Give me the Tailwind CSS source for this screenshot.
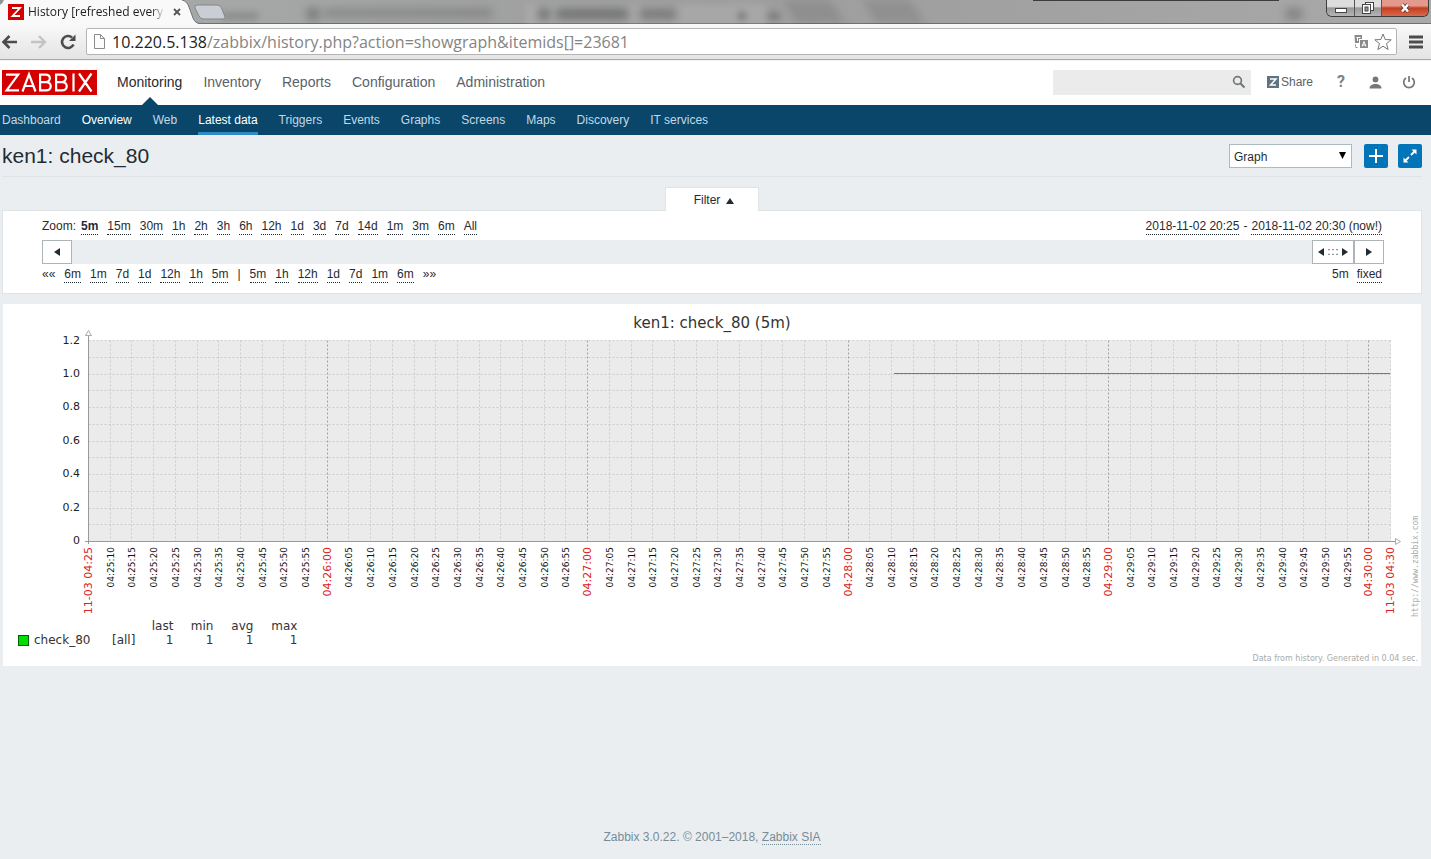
<!DOCTYPE html>
<html lang="en">
<head>
<meta charset="utf-8">
<title>History [refreshed every 30 sec.]</title>
<script src="https://cdn.jsdelivr.net/npm/@tailwindcss/browser@4"></script>
</head>
<body class="min-h-screen flex flex-col bg-[#ebeef0] font-['Liberation_Sans',Arial,sans-serif] text-xs text-[#1f2c33]">

<!-- Browser window: title bar -->
<div class="relative h-6 overflow-hidden bg-linear-to-r from-[#a9abab] via-[#9d9d9d] to-[#a8a8a8] flex justify-between items-start shadow-[inset_0_-1px_0_#6f6f6f]">
  <div aria-hidden="true" class="absolute inset-0 overflow-hidden">
    <div class="absolute left-[222px] top-3 w-9 h-2 bg-black/15 blur-[3px]"></div>
    <div class="absolute left-[307px] top-2 w-3 h-3 bg-black/25 blur-[4px]"></div>
    <div class="absolute left-[324px] top-2 w-42 h-2.5 bg-black/15 blur-[4px]"></div>
    <div class="absolute left-[526px] top-1 w-60 h-6 bg-white/10 blur-[3px]"></div>
    <div class="absolute left-[538px] top-2 w-3 h-3 bg-black/30 blur-[4px]"></div>
    <div class="absolute left-[556px] top-2 w-18 h-3 bg-black/30 blur-[4px]"></div>
    <div class="absolute left-[640px] top-2 w-9 h-3 bg-black/25 blur-[4px]"></div>
    <div class="absolute left-[738px] top-3 w-2 h-2 bg-black/25 blur-[3px]"></div>
    <div class="absolute left-[768px] top-3 w-3 h-2 bg-black/20 blur-[3px]"></div>
    <div class="absolute left-[790px] top-0 w-12 h-6 bg-black/10 blur-[5px] skew-x-[30deg]"></div>
    <div class="absolute left-[870px] top-0 w-12 h-6 bg-black/10 blur-[5px] skew-x-[30deg]"></div>
    <div class="absolute left-[1286px] top-2 w-4 h-3 bg-black/20 blur-[4px]"></div>
    <div class="absolute left-[1033px] -top-px w-[246px] h-0.5 bg-[#3c3c3c]"></div>
  </div>
  <div class="relative flex">
    <div class="relative w-[197px] h-6 flex items-center pl-2">
      <svg class="absolute inset-0" width="232" height="24" aria-hidden="true">
        <path d="M0 0H182Q187 1 189 7L193 18Q195 24 201 24H0Z" fill="#f9f9f9"/>
        <path d="M0 0V5Q3 3 4 0Z" fill="#8f9694"/>
        <path d="M182 0Q187 1 189 7L193 18Q195 23.500 201 23.500" fill="none" stroke="#6f7476"/>
        <path d="M197 5H217Q221 5 222 9L225 17Q226 19 223 19H204Q200 19 199 16L195 8Q194 5 197 5Z" fill="#c9ced4" stroke="#83878a"/>
      </svg>
      <svg class="relative shrink-0" width="16" height="16" viewBox="0 0 16 16" aria-hidden="true"><path fill="#d40000" d="M0 0h16v16H0z"/><path d="M4 4h8L4.500 12H12" fill="none" stroke="#fff" stroke-width="1.800"/></svg>
      <span class="relative ml-1 w-[137px] whitespace-nowrap text-[12px] leading-5 text-[#222] font-['Open_Sans',sans-serif] mask-r-from-90%">History [refreshed every</span>
      <button aria-label="Close tab" class="relative ml-2 shrink-0"><svg width="8" height="8"><path d="M1 1l6 6M7 1l-6 6" stroke="#555" stroke-width="1.800"/></svg></button>
    </div>
  </div>
  <div class="relative flex mr-0.5 h-[17px] rounded-b-md overflow-hidden border border-t-0 border-[#3c3c3c]">
    <button aria-label="Minimize" class="w-7 flex items-center justify-center border-r border-[#555] bg-linear-to-b from-[#ddd] from-40% via-[#999] via-50% to-[#b5b5b5]"><svg width="14" height="14"><rect x="1.500" y="7.500" width="11" height="4" fill="#fff" stroke="#444"/></svg></button>
    <button aria-label="Restore" class="w-[27px] flex items-center justify-center border-r border-[#555] bg-linear-to-b from-[#ddd] from-40% via-[#999] via-50% to-[#b5b5b5]"><svg width="14" height="14"><rect x="4.500" y="1.500" width="8" height="8" fill="#fff" stroke="#444"/><rect x="1.500" y="3.500" width="8" height="9" fill="#fff" stroke="#444"/><rect x="4" y="6" width="3" height="4" fill="#999" stroke="#444"/></svg></button>
    <button aria-label="Close window" class="w-[46px] flex items-center justify-center bg-linear-to-b from-[#e39a8c] from-35% via-[#c33c1f] via-50% to-[#d9694b]"><svg width="14" height="12"><path d="M4 2.500l6 7M10 2.500l-6 7" stroke="#533" stroke-width="4"/><path d="M4 2.500l6 7M10 2.500l-6 7" stroke="#fff" stroke-width="2.500"/></svg></button>
  </div>
</div>

<!-- Browser window: toolbar -->
<div class="h-9 flex items-center bg-linear-to-b from-[#f9f9f9] to-[#e4e4e4] border-b border-[#aaa]">
  <button aria-label="Back" class="ml-px w-[30px]"><svg width="17" height="16"><path d="M16 8H3M8.500 2L2.500 8l6 6" fill="none" stroke="#4c4c4c" stroke-width="2.600"/></svg></button>
  <button aria-label="Forward" class="w-7"><svg width="17" height="16"><path d="M0 8h13M8 2l6 6-6 6" fill="none" stroke="#c4c4c4" stroke-width="2.400"/></svg></button>
  <button aria-label="Reload" class="w-[27px]"><svg width="18" height="18"><path d="M14.500 11.500A6 6 0 1 1 13 4.500" fill="none" stroke="#4c4c4c" stroke-width="2.600"/><path d="M16.500 1.500V8H10z" fill="#4c4c4c"/></svg></button>
  <div class="flex-1 h-[27px] flex items-center bg-white border border-[#b4b4b4] rounded-xs px-1.5">
    <svg class="shrink-0" width="13" height="16"><path d="M1.500.500h6l4 4v10h-10zM7.500.500v4h4" fill="#fcfcfc" stroke="#8b8b8b"/></svg>
    <a href="#" class="flex-1 ml-1.5 whitespace-nowrap text-[16px] leading-6 text-[#848484] font-['Open_Sans',sans-serif]" aria-label="Address"><span class="text-[#222]">10.220.5.138</span>/zabbix/history.php?action=showgraph&amp;itemids[]=23681</a>
    <button aria-label="Translate this page" class="mr-1.5"><svg width="14" height="14"><path d="M.5 0H8v4H5v4H1z" fill="#8a8a8a"/><path d="M2.500 2.500h4M3.500 2v4" stroke="#fff"/><rect x="6" y="5" width="8" height="8" fill="#8a8a8a"/><path d="M8 11.500l2-5 2 5M8.500 10h3" fill="none" stroke="#fff"/><path d="M1.500 9.500v3h3" fill="none" stroke="#8a8a8a" stroke-dasharray="2 1"/></svg></button>
    <button aria-label="Bookmark this page" class="-mr-0.5"><svg width="18" height="18" viewBox="0 0 18 18"><path d="M9 1l2.200 5.500 6 .3-4.700 3.800 1.600 5.900L9 13.200l-5.100 3.300 1.600-5.900L.8 6.800l6-.3z" fill="#fff" stroke="#777"/></svg></button>
  </div>
  <button aria-label="Menu" class="ml-3 mr-2"><svg width="14" height="14"><path d="M0 2h14M0 7h14M0 12h14" stroke="#4c4c4c" stroke-width="2.800"/></svg></button>
</div>

<!-- Zabbix header -->
<header class="bg-white border-t border-[#f1f1f1]">
  <div class="h-11 flex items-center pb-0.5 pl-0.5 pr-[15px]">
    <a href="#" aria-label="ZABBIX" class="w-[95px] h-[25px] bg-[#d40000] shrink-0"><svg width="95" height="25" viewBox="0 0 95 25"><path fill="none" stroke="#fff" stroke-width="2.200" d="M4 4.600h12.200L4.600 20.400H17M20.500 21.500L27 4.400l6.500 17.100M22.800 16h8.500M38.100 4.600h5.400c5.800 0 5.800 7.500 0 7.500h-5.400zM38.100 12.100h6c6.200 0 6.200 8.300 0 8.300h-6zM54.100 4.600h5.400c5.800 0 5.800 7.500 0 7.500h-5.400zM54.100 12.100h6c6.200 0 6.200 8.300 0 8.300h-6zM71.500 3.500v18M77 3.500l12.500 18M89.500 3.500L77 21.500"/></svg></a>
    <nav aria-label="Main" class="ml-5 h-full flex items-center gap-[21px] text-sm text-[#5a6268]">
      <a href="#" class="relative h-full flex items-center text-[#1f2c33]">Monitoring<span class="absolute -bottom-0.5 left-1/2 -translate-x-1/2 border-x-8 border-b-8 border-x-transparent border-b-[#0a466a]"></span></a>
      <a href="#">Inventory</a><a href="#">Reports</a><a href="#">Configuration</a><a href="#">Administration</a>
    </nav>
    <form class="ml-auto flex items-center w-[198px] h-[25px] bg-[#ebebeb]">
      <input type="search" aria-label="Search" class="flex-1 min-w-0 h-full px-2 bg-transparent outline-none">
      <button type="button" aria-label="Search" class="mr-[5px]"><svg width="14" height="14"><circle cx="5.500" cy="5.500" r="3.900" fill="none" stroke="#73787c" stroke-width="1.700"/><path d="M8.500 8.500l4 4" stroke="#73787c" stroke-width="2.200"/></svg></button>
    </form>
    <a href="#" class="ml-4 flex items-center gap-0.5 text-[#5a6268]"><svg width="12" height="12"><path fill="#5f7380" d="M0 0h12v12H0z"/><path d="M3 3h6L3.500 9H9" fill="none" stroke="#fff" stroke-width="1.500"/></svg>Share</a>
    <a href="#" aria-label="Help" class="ml-6 text-base leading-4 font-bold text-[#7b858c] font-[Roboto,sans-serif]">?</a>
    <a href="#" aria-label="Profile" class="ml-6"><svg width="13" height="13"><circle cx="6.500" cy="3.400" r="2.900" fill="#73787c"/><path d="M.5 12.500C.5 9.500 3 8 6.500 8s6 1.500 6 4.500z" fill="#73787c"/></svg></a>
    <a href="#" aria-label="Sign out" class="ml-5"><svg width="14" height="14"><path d="M4 3A5.300 5.300 0 1 0 10 3M7 1v6" fill="none" stroke="#73787c" stroke-width="1.700"/></svg></a>
  </div>
  <nav aria-label="Monitoring" class="h-[30px] flex items-stretch gap-[21px] pl-0.5 bg-[#0a466a] text-[#c3d9e6] leading-[30px] whitespace-nowrap">
    <a href="#">Dashboard</a><a href="#" class="text-white">Overview</a><a href="#">Web</a><a href="#" class="text-white shadow-[inset_0_-3px_0_#2f8bc4]">Latest data</a><a href="#">Triggers</a><a href="#">Events</a><a href="#">Graphs</a><a href="#">Screens</a><a href="#">Maps</a><a href="#">Discovery</a><a href="#">IT services</a>
  </nav>
</header>

<main class="flex-1 pl-0.5 pr-[9px]">
  <div class="h-[42px] flex items-center pt-px border-b border-[#dfe4e7]">
    <h1 class="text-[21px] flex-1">ken1: check_80</h1>
    <div class="relative">
      <select aria-label="View as" class="appearance-none block w-[123px] h-6 pl-1 pt-0.5 bg-white border border-[#acbbc2] text-xs"><option>Graph</option></select>
      <svg class="absolute right-1.5 top-2 pointer-events-none" width="7" height="7"><path d="M0 0h7L3.500 7z" fill="#000"/></svg>
    </div>
    <button aria-label="Add to favourites" class="ml-3 w-6 h-6 rounded-xs bg-[#0275b8]"><svg width="24" height="24"><path d="M12 5v14M5 12h14" stroke="#fff" stroke-width="2"/></svg></button>
    <button aria-label="Fullscreen" class="ml-2.5 w-6 h-6 rounded-xs bg-[#0275b8]"><svg width="24" height="24"><path d="M13.500 5.500h5v5zM5.500 13.500v5h5z" fill="#fff"/><path d="M17 7l-4 4M7 17l4-4" stroke="#fff" stroke-width="1.800"/></svg></button>
  </div>

  <!-- Time filter -->
  <div class="pt-2.5 flex justify-center"><button class="relative -mb-px w-[94px] h-6 bg-white border border-b-0 border-[#dfe4e7] flex items-center justify-center gap-1.5 pl-1">Filter <svg class="mt-0.5" width="8" height="6"><path d="M0 6h8L4 0z" fill="#1f2c33"/></svg></button></div>
  <section aria-label="Time period" class="h-[84px] bg-white border border-[#dfe4e7] pl-[39px] pr-[37px] pt-2">
    <div class="flex justify-between leading-[15px] pr-0.5">
      <div class="flex" id="zoom"><span class="mr-[5px]">Zoom:</span></div>
      <div class="flex gap-1"><a href="#" class="border-b border-dotted border-[#1f2c33]">2018-11-02 20:25</a><span>-</span><a href="#" class="border-b border-dotted border-[#1f2c33]">2018-11-02 20:30 (now!)</a></div>
    </div>
    <div class="mt-[5px] h-6 flex justify-end bg-[#ebeef0]">
      <button aria-label="Earlier" class="w-[30px] mr-auto bg-white border border-[#acb4b8] flex items-center justify-center"><svg width="6" height="8"><path d="M6 0v8L0 4z" fill="#1f2c33"/></svg></button>
      <button aria-label="Drag period" class="w-[42px] bg-white border border-[#acb4b8] flex items-center justify-center gap-1"><svg width="6" height="8"><path d="M6 0v8L0 4z" fill="#1f2c33"/></svg><svg width="10" height="6"><path d="M0 .500h10M0 5.500h10" stroke="#999" stroke-width="1.500" stroke-dasharray="2"/></svg><svg width="6" height="8"><path d="M0 0v8l6-4z" fill="#1f2c33"/></svg></button>
      <button aria-label="Later" class="w-[30px] bg-white border border-[#acb4b8] flex items-center justify-center"><svg width="6" height="8"><path d="M0 0v8l6-4z" fill="#1f2c33"/></svg></button>
    </div>
    <div class="mt-[3px] flex justify-between leading-[15px] pr-0.5">
      <div class="flex gap-[9px]" id="shift"></div>
      <div class="flex gap-2"><span>5m</span><a href="#" class="border-b border-dotted border-[#1f2c33]">fixed</a></div>
    </div>
  </section>

  <!-- Graph -->
  <section aria-label="Graph" class="mt-[10px] ml-px mr-px pt-1.5 bg-white font-['DejaVu_Sans',sans-serif] text-[#333]">
    <h2 class="text-center text-[15px] leading-[26px] -mb-1.5">ken1: check_80 (5m)</h2>
    <svg id="chart" class="block w-full h-auto relative" viewBox="3 330 1418 289" role="img" aria-label="check_80 history"></svg>
    <table class="ml-[15px] leading-[14px]">
      <thead><tr><td class="w-[94px]"></td><td class="w-[22px]"></td><th class="w-[38px] font-normal text-right">last</th><th class="w-[40px] font-normal text-right">min</th><th class="w-[40px] font-normal text-right">avg</th><th class="w-[44px] font-normal text-right">max</th></tr></thead>
      <tbody><tr><td><span class="flex items-center gap-[5px]"><i class="w-[11px] h-[11px] bg-[#00dd00] border border-[#006000]"></i>check_80</span></td><td>[all]</td><td class="text-right">1</td><td class="text-right">1</td><td class="text-right">1</td><td class="text-right">1</td></tr></tbody>
    </table>
    <p class="mt-[7px] h-3 pr-[3px] text-right text-[8px] leading-[10px] text-[#aaa]">Data from history. Generated in 0.04 sec.</p>
  </section>
</main>

<footer class="pb-3.5 pr-[7px] text-center leading-4 text-[#768d99]">Zabbix 3.0.22. © 2001–2018, <a href="#" class="border-b border-dotted border-[#768d99]">Zabbix SIA</a></footer>

<script>
const link = (t, bold) => `<a href="#" class="border-b border-dotted border-[#1f2c33]${bold ? ' font-bold' : ''}">${t}</a>`;
document.getElementById('zoom').innerHTML += '<span class="flex gap-[9px]">' + '5m 15m 30m 1h 2h 3h 6h 12h 1d 3d 7d 14d 1m 3m 6m All'.split(' ').map((t, i) => link(t, i === 0)).join('') + '</span>';
document.getElementById('shift').innerHTML = '<span>««</span>' + '6m 1m 7d 1d 12h 1h 5m'.split(' ').map(t => link(t)).join('') + '<span>|</span>' + '5m 1h 12h 1d 7d 1m 6m'.split(' ').map(t => link(t)).join('') + '<span>»»</span>';

const L = 88.5, R = 1390.5, T = 340.5, B = 541.5, n = 60, step = (R - L) / n;
let s = `<rect x="${L}" y="${T}" width="${R - L}" height="${B - T}" fill="#ebebeb"/>`;
for (let i = 0; i < 12; i++) {
  const y = Math.floor(T + i * (B - T) / 12) + 0.5;
  s += `<path d="M${L} ${y}H${R}" stroke="#cccccc" stroke-dasharray="2 2"/>`;
}
const vtext = (x, t, size, fill) => `<text transform="translate(${x} 547) rotate(-90)" text-anchor="end" font-size="${size}" fill="${fill}">${t}</text>`;
for (let i = 1; i <= n; i++) {
  const x = Math.floor(L + i * step) + 0.5, sec = 5 + i * 5, major = sec % 60 === 0;
  s += `<path d="M${x} ${T}V${B}" stroke="${major ? '#a0a0a0' : '#cccccc'}" stroke-dasharray="2 2"/>`;
  if (i < n) {
    const t = '04:' + (25 + Math.floor(sec / 60)) + ':' + String(sec % 60).padStart(2, '0');
    s += major ? vtext(x + 3, t, 11, '#dd2222') : vtext(x + 3, t, 9, '#111');
  }
}
s += vtext(L + 3, '11-03 04:25', 11, '#dd2222') + vtext(R + 3, '11-03 04:30', 11, '#dd2222');
['1.2', '1.0', '0.8', '0.6', '0.4', '0.2', '0'].forEach((t, i) => {
  s += `<text x="80" y="${Math.floor(344 + i * 33.4)}" text-anchor="end" font-size="11" fill="#222">${t}</text>`;
});
s += `<path d="M${L} 335V544M85 ${B}H1396" stroke="#999" fill="none"/><path d="M85.500 335.500h6l-3-5zM1395.500 538.500v6l5-3z" fill="#fff" stroke="#aaa"/>`;
s += `<rect x="894" y="373" width="496" height="1" fill="#00c814"/>`;
s += `<text transform="translate(1418 617) rotate(-90)" font-family="DejaVu Sans Mono" font-size="8" fill="#aaa">http://www.zabbix.com</text>`;
document.getElementById('chart').innerHTML = s;
</script>
</body>
</html>
